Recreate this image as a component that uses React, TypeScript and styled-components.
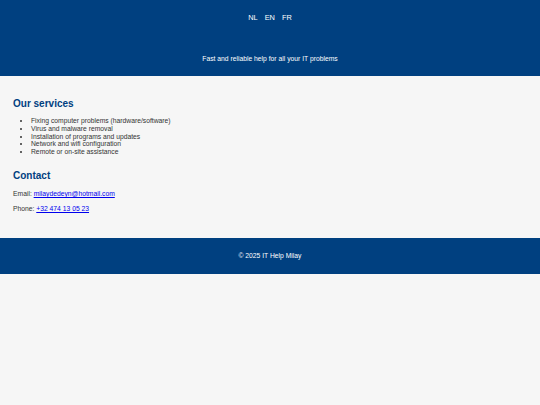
import React from "react";
import styled, { createGlobalStyle } from "styled-components";

const Global = createGlobalStyle`
  html, body { margin: 0; padding: 0; background: #f6f6f6; }
  body { font-family: "Liberation Sans", Arial, sans-serif; color: #333; }
  * { box-sizing: border-box; }
`;

const Page = styled.div`
  min-height: 405px;
  background: #f6f6f6;
  display: flex;
  flex-direction: column;
`;

const Header = styled.header`
  background: #004080;
  color: #ffffff;
  text-align: center;
  padding: 13px 0 13px;
`;

const Nav = styled.nav`
  display: flex;
  justify-content: center;
  gap: 7px;
  font-size: 7.4px;
  line-height: 10px;
`;

const NavLink = styled.a`
  color: #ffffff;
  text-decoration: none;
`;

const Tagline = styled.p`
  margin: 31px 0 0;
  font-size: 6.75px;
  line-height: 9px;
`;

const Main = styled.main`
  padding: 0 13px;
`;

const SectionTitle = styled.h2<{ $top: number }>`
  margin: ${(p) => p.$top}px 0 0;
  font-size: 10px;
  line-height: 14px;
  font-weight: bold;
  color: #004080;
`;

const List = styled.ul`
  margin: 6px 0 0;
  padding-left: 18px;
  font-size: 6.75px;
  line-height: 7.75px;
  color: #333;
`;

const Line = styled.p<{ $top: number }>`
  margin: ${(p) => p.$top}px 0 0;
  font-size: 6.75px;
  line-height: 9px;
  color: #333;
`;

const Link = styled.a`
  color: #0000ee;
  text-decoration: underline;
`;

const Footer = styled.footer`
  margin-top: 25px;
  background: #004080;
  color: #ffffff;
  text-align: center;
  padding: 13px 0 13.5px;
  font-size: 6.75px;
  line-height: 9px;
`;

export default function App() {
  return (
    <Page>
      <Global />
      <Header>
        <Nav>
          <NavLink href="#">NL</NavLink>
          <NavLink href="#">EN</NavLink>
          <NavLink href="#">FR</NavLink>
        </Nav>
        <Tagline>Fast and reliable help for all your IT problems</Tagline>
      </Header>
      <Main>
        <SectionTitle $top={21}>Our services</SectionTitle>
        <List>
          <li>Fixing computer problems (hardware/software)</li>
          <li>Virus and malware removal</li>
          <li>Installation of programs and updates</li>
          <li>Network and wifi configuration</li>
          <li>Remote or on-site assistance</li>
        </List>
        <SectionTitle $top={13}>Contact</SectionTitle>
        <Line $top={6.5}>
          Email: <Link href="mailto:milaydedeyn@hotmail.com">milaydedeyn@hotmail.com</Link>
        </Line>
        <Line $top={6}>
          Phone: <Link href="tel:+32474130523">+32 474 13 05 23</Link>
        </Line>
      </Main>
      <Footer>© 2025 IT Help Milay</Footer>
    </Page>
  );
}
